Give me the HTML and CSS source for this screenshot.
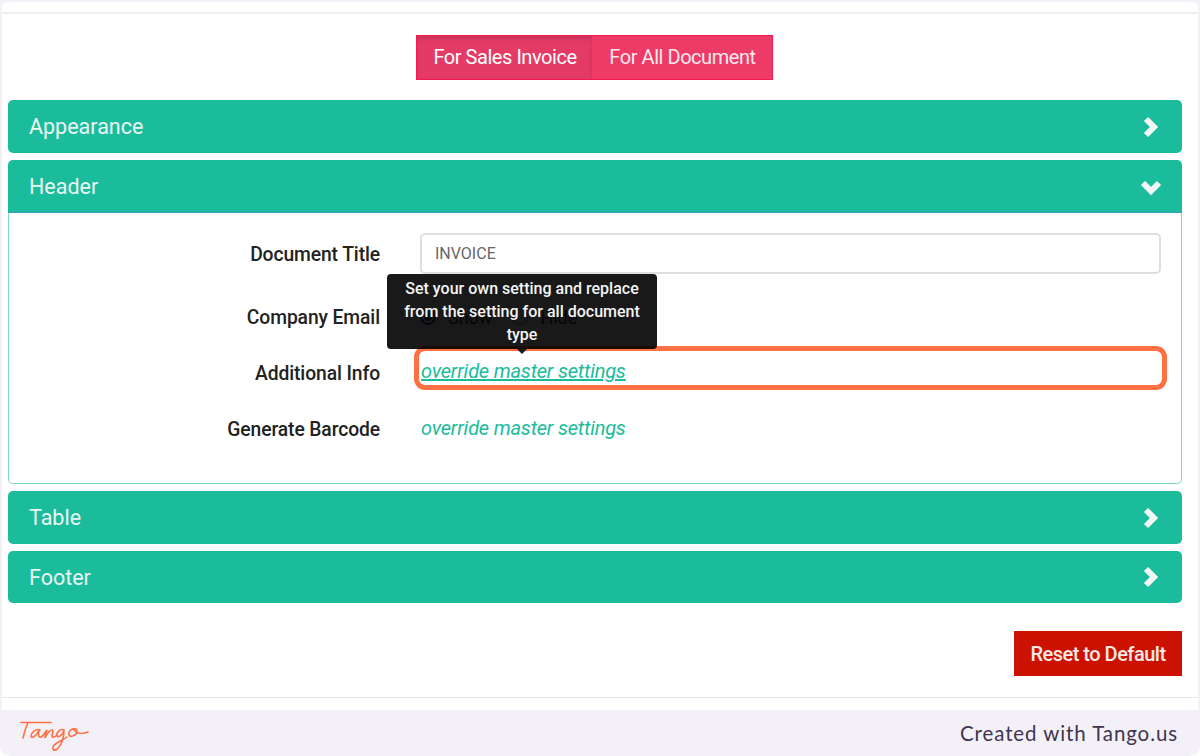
FILE: index.html
```html
<!DOCTYPE html>
<html lang="en">
<head>
<meta charset="utf-8">
<title>Tango capture</title>
<link rel="stylesheet" href="styles.css">
</head>
<body>
<div class="shot">
  <main class="card">
    <div class="topline"></div>
    <div class="tabs">
      <button class="tab tab-active">For Sales Invoice</button>
      <button class="tab tab-other">For All Document</button>
    </div>
    <section class="accordion">
      <div class="panel-head">
        <span>Appearance</span>
        <svg class="chev" viewBox="0 0 22 22"><path d="M6 3 L14 11 L6 19"/></svg>
      </div>
      <div class="panel-open">
        <div class="panel-head panel-head-open">
          <span>Header</span>
          <svg class="chev" viewBox="0 0 22 22"><path d="M3 7 L11 15 L19 7"/></svg>
        </div>
        <div class="panel-body">
          <div class="row row-title">
            <label class="lbl lbl-title">Document Title</label>
            <input class="txt" type="text" value="INVOICE">
          </div>
          <div class="row row-email">
            <label class="lbl">Company Email</label>
            <div class="radios">
              <span class="radio radio-on"></span><span class="radio-text">Show</span>
              <span class="radio"></span><span class="radio-text">Hide</span>
            </div>
          </div>
          <div class="row row-info">
            <label class="lbl">Additional Info</label>
            <a class="link link-u">override master settings</a>
            <div class="highlight"></div>
            <div class="tooltip">Set your own setting and replace from the setting for all document type</div>
          </div>
          <div class="row row-barcode">
            <label class="lbl">Generate Barcode</label>
            <a class="link">override master settings</a>
          </div>
        </div>
      </div>
      <div class="panel-head">
        <span>Table</span>
        <svg class="chev" viewBox="0 0 22 22"><path d="M6 3 L14 11 L6 19"/></svg>
      </div>
      <div class="panel-head panel-foot">
        <span>Footer</span>
        <svg class="chev" viewBox="0 0 22 22"><path d="M6 3 L14 11 L6 19"/></svg>
      </div>
    </section>
    <div class="actions"><button class="reset">Reset to Default</button></div>
    <div class="bottomline"></div>
  </main>
  <footer class="tango">
    <svg class="logo" viewBox="0 0 70 36" role="img" aria-label="Tango">
      <path d="M1 5.5 H31"/>
      <path d="M8 5.5 C6 10 4 16 3 21"/>
      <path d="M20 13 C16 11 11 16 11 19 C11 22 16 20 19 13 C18 17 18 21 21 20 C23 19 25 16 27 13 C26 16 25 18 25 21 C27 17 30 13 32 13 C34 13 32 17 32 19 C32 21 35 20 37 18"/>
      <path d="M44 13 C40 11 36 16 37 19 C38 21 43 18 44 13 C44 19 43 26 38 31 C36 34 32 34 33 30 C34 26 42 24 47 20"/>
      <path d="M55 12 C51 11 48 15 49 18 C51 21 57 18 57 14 C57 12 55 11 54 13 C57 17 63 17 68 15"/>
    </svg>
    <span class="credit">Created with Tango.us</span>
  </footer>
</div>
</body>
</html>
```
FILE: styles.css
```css
* { box-sizing: border-box; }
html, body { margin: 0; padding: 0; background: #fff; }
body { font-family: Roboto, "Liberation Sans", sans-serif; }
.shot {
  width: 1200px; height: 756px; background: #f3f1f7;
  border-radius: 0 0 10px 10px; padding: 2px 2px 0;
  display: flex; flex-direction: column; overflow: hidden;
}
.card {
  height: 708px; background: #fff; border-radius: 6px 6px 0 0;
  display: flex; flex-direction: column; padding-top: 10px;
}
.topline { height: 2px; background: #eeeeee; flex: none; }
.tabs { display: flex; justify-content: center; margin: 21px 0 20px; padding-right: 11px; }
.tab {
  height: 45px; padding: 0 0 2px 1px; border: 1px solid #f5194f; background: #ee3a67;
  color: #fff; font: 400 20px/1 Roboto, sans-serif; letter-spacing: -0.45px; margin: 0;
}
.tab-active { width: 176px; background: #e43b66; box-shadow: inset 0 3px 5px rgba(0,0,0,.125); border-right: 0; }
.tab-other { width: 181px; border-left: 0; color: #f4e9ec; }
.accordion { padding: 0 16px 0 6px; display: flex; flex-direction: column; gap: 7px; }
.panel-head {
  height: 53px; background: #1abc9c; border-radius: 5px; color: #eaf6f3;
  display: flex; align-items: center; justify-content: space-between;
  padding: 0 20px 0 21px; font-size: 21.5px;
}
.panel-foot { height: 52px; }
.panel-head-open { border-radius: 5px 5px 0 0; box-shadow: inset 0 -1px 0 #3a9cc4; }
.chev { width: 22px; height: 22px; fill: none; stroke: #f1f7f5; stroke-width: 6; stroke-linejoin: miter; }
.panel-open { display: flex; flex-direction: column; }
.panel-body {
  height: 271px; border: 1px solid #7fd6c3; border-top: 0; border-radius: 0 0 5px 5px;
  padding-top: 20px; display: flex; flex-direction: column;
}
.row { display: grid; grid-template-columns: 371px 741px; column-gap: 40px; align-items: center; position: relative; }
.row-title { height: 41px; }
.row-email { height: 24px; margin-top: 31px; }
.row-info { height: 34px; margin-top: 27px; }
.row-barcode { height: 34px; margin-top: 22px; }
.lbl { text-align: right; font-size: 19.3px; font-weight: 500; color: #222; letter-spacing: -0.1px; padding-top: 1px; }
.lbl-title { padding-top: 2px; }
.txt {
  width: 741px; height: 41px; border: 2px solid #dedede; border-radius: 5px;
  padding: 0 13px; font: 400 16px Roboto, sans-serif; color: #666; background: #fff;
}
.radios { display: flex; align-items: center; color: #333; font-size: 18px; }
.radio { width: 16px; height: 16px; border: 1px solid #777; border-radius: 50%; margin-right: 12px; }
.radio-on { border: 2px solid #1b4f9c; box-shadow: inset 0 0 0 2px #fff; background: #1b4f9c; }
.radio-text { margin-right: 20px; }
.link { color: #1abc9c; font-size: 20px; font-style: italic; padding: 0 0 2px 1px; letter-spacing: -0.2px; }
.link-u { text-decoration: underline; padding-bottom: 4px; }
.highlight {
  position: absolute; left: 405px; top: -10px; width: 753px; height: 44px;
  border: 5px solid #ff7043; border-radius: 11px;
}
.tooltip {
  position: absolute; left: 378px; top: -82px; width: 270px; height: 75px;
  background: rgba(0,0,0,.9); border-radius: 4px; color: #f4f4f4;
  font-size: 16px; font-weight: 500; line-height: 23px; text-align: center; padding: 3px 14px 0;
}
.tooltip::after {
  content: ""; position: absolute; left: 130px; bottom: -5px;
  border: 5px solid transparent; border-top-color: #1a1a1a; border-bottom: 0;
}
.actions { display: flex; justify-content: flex-end; padding: 28px 16px 0 0; }
.reset {
  width: 168px; height: 45px; background: #cb1200; border: 0; color: #f6e9e6;
  font: 500 20px/1 Roboto, sans-serif; letter-spacing: -0.5px;
}
.bottomline { height: 1px; background: #e6e6e6; margin-top: 21px; }
.tango {
  flex: 1; display: flex; align-items: center; justify-content: space-between;
  padding: 0 20px 0 18px;
}
.logo { width: 70px; height: 36px; fill: none; stroke: #ff7043; stroke-width: 1.6; stroke-linecap: round; margin-top: 3px; }
.credit { font-family: Lato, "Open Sans", sans-serif; font-size: 20.5px; color: #3f3550; letter-spacing: 0.9px; }
```
